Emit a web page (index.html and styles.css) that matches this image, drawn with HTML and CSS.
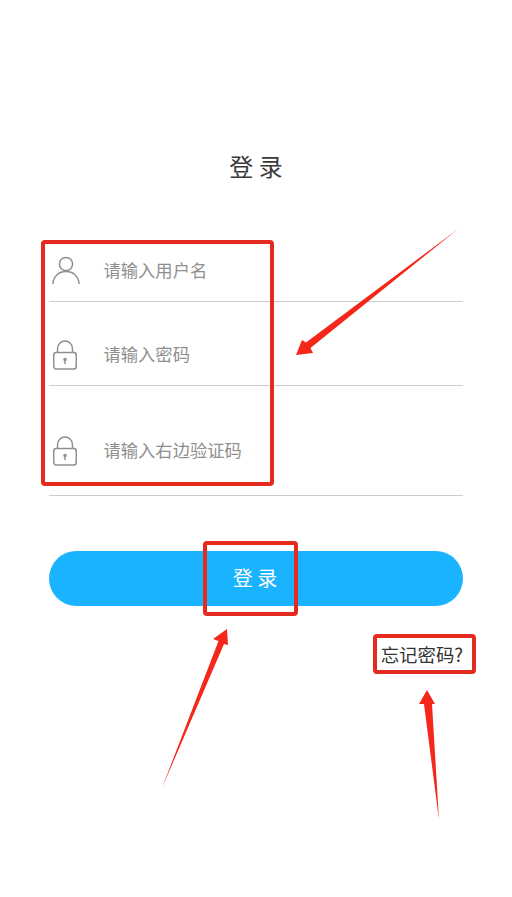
FILE: index.html
```html
<!DOCTYPE html>
<html lang="zh">
<head>
<meta charset="utf-8">
<title>登录</title>
<link rel="stylesheet" href="styles.css">
</head>
<body>
<main class="page">
  <h1 class="title">登 录</h1>
  <form class="form">
    <div class="row row-user">
      <svg class="icon" width="28" height="28" viewBox="0 0 28 28" fill="none" stroke="#8f8f8f" stroke-width="1.5"><circle cx="14" cy="8" r="6.6"/><path d="M1 27.500C1.500 20 7 15.600 14 15.600S26.500 20 27 27.500" stroke-linecap="round"/></svg>
      <span class="hint">请输入用户名</span>
    </div>
    <div class="row row-pass">
      <svg class="icon icon-lock" width="28" height="30" viewBox="0 0 28 30" fill="none" stroke="#8f8f8f" stroke-width="1.500"><rect x="1.750" y="12.500" width="22.500" height="16.500" rx="2.500"/><path d="M5.500 12.500V8.500a7.500 7.500 0 0 1 15 0V12.500"/><circle cx="13" cy="19.500" r="1.700" fill="#8f8f8f" stroke="none"/><path d="M13 19.500v4.500"/></svg>
      <span class="hint">请输入密码</span>
    </div>
    <div class="row row-code">
      <svg class="icon icon-lock" width="28" height="30" viewBox="0 0 28 30" fill="none" stroke="#8f8f8f" stroke-width="1.500"><rect x="1.750" y="12.500" width="22.500" height="16.500" rx="2.500"/><path d="M5.500 12.500V8.500a7.500 7.500 0 0 1 15 0V12.500"/><circle cx="13" cy="19.500" r="1.700" fill="#8f8f8f" stroke="none"/><path d="M13 19.500v4.500"/></svg>
      <span class="hint">请输入右边验证码</span>
    </div>
    <button class="submit" type="button"><span class="submit-label">登 录</span></button>
    <div class="links"><a class="forgot">忘记密码?</a></div>
  </form>
</main>
<svg class="marks" width="512" height="897" viewBox="0 0 512 897">
  <g fill="none" stroke="#e52a20" stroke-width="4">
    <rect x="43" y="242" width="229" height="242" rx="2"/>
    <rect x="205" y="543" width="91" height="71" rx="2"/>
    <rect x="375" y="636" width="99" height="36" rx="2"/>
  </g>
  <g fill="#f5261a">
    <path d="M458 229 L310.500 348 L313 353 L296 355 L302 340 L306 342.500 Z"/>
    <path d="M162 788 L224 644 L228 645 L227 629 L213 639 L218.500 641 Z"/>
    <path d="M439 820 L432 704 L435 704 L427 690 L419 704 L424 704 Z"/>
  </g>
</svg>
</body>
</html>
```
FILE: styles.css
```css
html, body {
  margin: 0;
  padding: 0;
  background: #fff;
}
body {
  position: relative;
  width: 512px;
  height: 897px;
  overflow: hidden;
  font-family: "Noto Sans CJK SC", "Noto Sans", sans-serif;
}
.page {
  display: flex;
  flex-direction: column;
  padding: 148px 49px 0;
}
.title {
  margin: 0;
  text-align: center;
  font-size: 24px;
  line-height: 36px;
  font-weight: 400;
  color: #3a3a3a;
}
.form {
  display: flex;
  flex-direction: column;
}
.row {
  display: flex;
  align-items: flex-end;
  padding-bottom: 17px;
  border-bottom: 1px solid #ccc;
}
.row-user { margin-top: 72px; }
.row-pass { margin-top: 38px; }
.row-code { margin-top: 50px; padding-bottom: 31px; }
.icon {
  flex: none;
  display: block;
  margin-left: 3px;
}
.icon-lock { margin-bottom: -2px; }
.hint {
  margin-left: 24px;
  font-size: 17.3px;
  line-height: 28px;
  color: #8f8f8f;
}
.icon + .hint { margin-left: 23.500px; }
.submit {
  margin-top: 55px;
  height: 55px;
  border: 0;
  padding: 0 2px 2px 0;
  border-radius: 28px;
  background: #1ab3ff;
  color: #fff;
  font: 400 20px/53px "Noto Sans CJK SC", sans-serif;
}
.links {
  display: flex;
  justify-content: flex-end;
  margin-top: 34px;
}
.forgot {
  font-size: 18.400px;
  line-height: 28px;
  color: #333;
}
.marks {
  position: absolute;
  left: 0;
  top: 0;
  pointer-events: none;
}
```
